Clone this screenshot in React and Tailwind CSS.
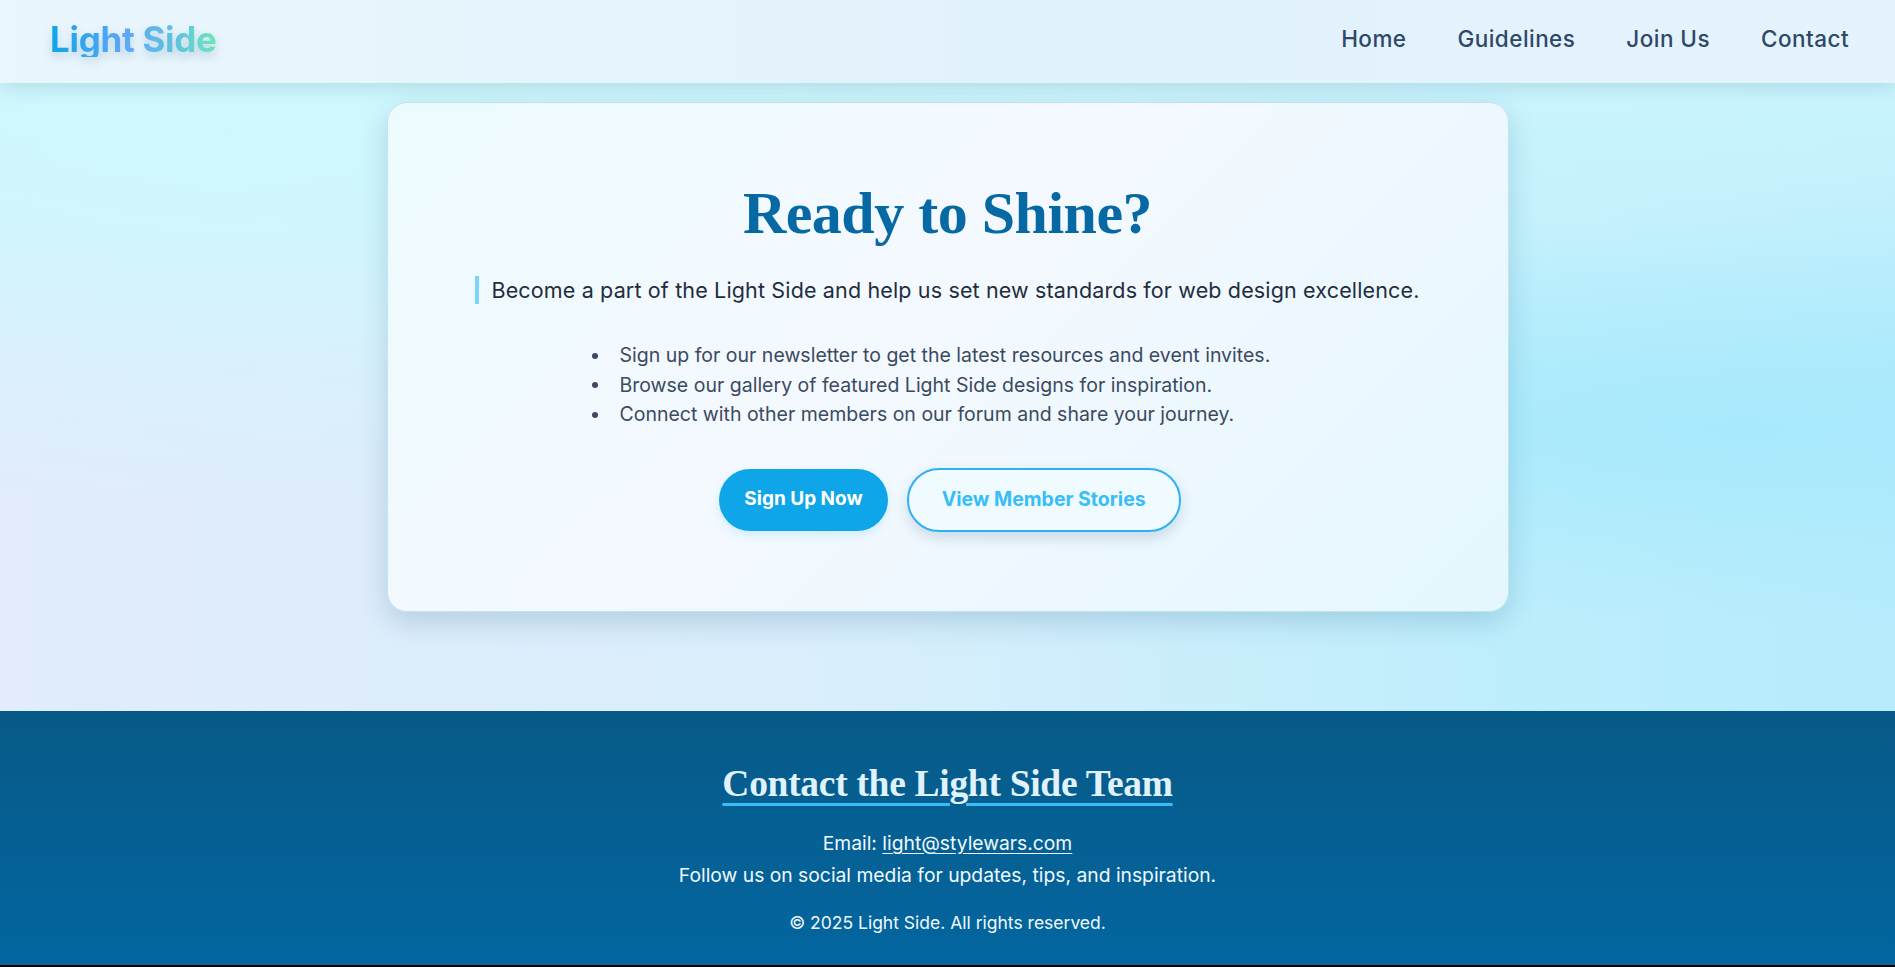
import React from "react";

const sans = "font-['Inter',_'Liberation_Sans',_sans-serif]";
const serif = "font-['Liberation_Serif',_'DejaVu_Serif',_serif]";

function Header() {
  return (
    <header className="relative z-10 h-[83px] flex items-center justify-between pl-[50px] pr-[46px] pb-[5px] bg-[linear-gradient(90deg,#eaf6fd_0%,#e2f2fc_55%,#e4f3fd_100%)] shadow-[0_4px_18px_rgba(20,80,110,0.16)]">
      <div className={`${sans} text-[35px] font-bold tracking-[-0.3px] leading-none bg-[linear-gradient(90deg,#0ea5e9_0%,#60a5fa_45%,#5ec3e0_75%,#6ee7b7_100%)] bg-clip-text text-transparent drop-shadow-[0_5px_5px_rgba(20,90,120,0.22)]`}>
        Light Side
      </div>
      <nav className={`${sans} flex items-center gap-[51px] text-[22.5px] tracking-[0.45px] font-medium text-[#2f4868]`}>
        <a>Home</a>
        <a>Guidelines</a>
        <a>Join Us</a>
        <a>Contact</a>
      </nav>
    </header>
  );
}

const items = [
  "Sign up for our newsletter to get the latest resources and event invites.",
  "Browse our gallery of featured Light Side designs for inspiration.",
  "Connect with other members on our forum and share your journey.",
];

function Card() {
  return (
    <section className="w-[1122px] mx-auto rounded-[20px] border border-[#bfe4f4] bg-[linear-gradient(135deg,#edfbfe_0%,#f4f9ff_45%,#e4f7fd_100%)] shadow-[0_10px_28px_rgba(30,100,140,0.22)] pt-[74px] pb-[79px] text-center">
      <h1 className={`${serif} text-[60px] leading-[72px] font-bold text-[#0769a3] tracking-[-0.5px]`}>
        Ready to Shine?
      </h1>
      <div className="mt-[27px] flex justify-center">
        <p className={`${sans} border-l-4 border-[#7dd3fc] pl-[12px] text-[21.5px] tracking-[0.15px] leading-[28px] text-[#1f2d3d]`}>
          Become a part of the Light Side and help us set new standards for web design excellence.
        </p>
      </div>
      <ul className={`${sans} w-[700px] mx-auto mt-[37px] text-left text-[19.5px] leading-[29.5px] text-[#3b4a5e]`}>
        {items.map((t) => (
          <li key={t} className="flex items-center">
            <span className="ml-[-6px] mr-[22px] w-[6px] h-[6px] rounded-full bg-[#3b4a5e] shrink-0" />
            <span>{t}</span>
          </li>
        ))}
      </ul>
      <div className={`${sans} mt-[38px] ml-[5px] flex justify-center items-center gap-[19px]`}>
        <button className="h-[62px] px-[25px] rounded-full bg-[#0ea5e9] text-white text-[19px] font-bold shadow-[0_4px_10px_rgba(14,165,233,0.15)]">
          Sign Up Now
        </button>
        <button className="h-[64px] px-[33px] rounded-full border-2 border-[#2fb0f0] bg-[#f0fbff] text-[#38bdf8] text-[19.5px] font-bold shadow-[0_6px_14px_rgba(20,60,90,0.16)]">
          View Member Stories
        </button>
      </div>
    </section>
  );
}

function Footer() {
  return (
    <footer className={`${sans} h-[256px] bg-[linear-gradient(180deg,#075a87_0%,#0366a0_100%)] border-b-2 border-black text-center pt-[50px] text-[#f0f9ff]`}>
      <h2 className={`${serif} inline-block text-[37.5px] leading-[45px] font-bold text-[#e0f2fe] underline decoration-[3px] decoration-[#38bdf8] underline-offset-[7px] tracking-[-0.3px]`}>
        Contact the Light Side Team
      </h2>
      <p className="mt-[21px] text-[19.3px] leading-[32px]">
        Email: <a className="underline underline-offset-[3px]">light@stylewars.com</a>
      </p>
      <p className="text-[19.3px] leading-[32px]">
        Follow us on social media for updates, tips, and inspiration.
      </p>
      <p className="mt-[20px] text-[17.5px] leading-[24px]">© 2025 Light Side. All rights reserved.</p>
    </footer>
  );
}

export default function App() {
  return (
    <div className="min-h-screen w-full">
      <Header />
      <main className="h-[628px] pt-[19px] bg-[radial-gradient(ellipse_at_92%_55%,#a8eafc_0%,rgba(168,234,252,0)_40%),radial-gradient(ellipse_at_12%_8%,#cff8fd_0%,rgba(207,248,253,0)_45%),linear-gradient(180deg,rgba(205,246,253,0.85)_0%,rgba(205,246,253,0)_45%),linear-gradient(90deg,#e2ecfb_0%,#d9eefc_45%,#bdeefc_80%,#b6ebfc_100%)]">
        <Card />
      </main>
      <Footer />
    </div>
  );
}
